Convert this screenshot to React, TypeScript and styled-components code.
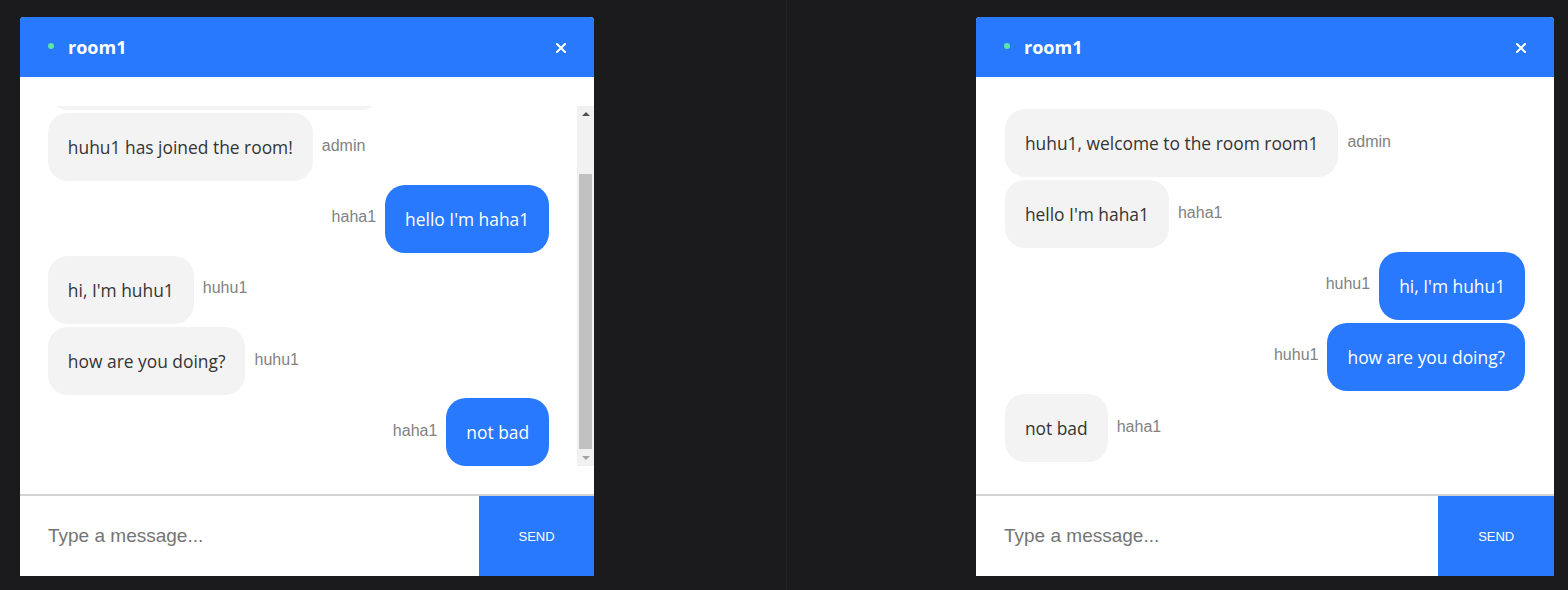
import React, { useLayoutEffect, useRef, useState } from "react";
import styled, { createGlobalStyle } from "styled-components";

const GlobalStyle = createGlobalStyle`
  html, body {
    margin: 0;
    padding: 0;
    background: #1b1b1d;
  }
  body {
    width: 1568px;
    height: 590px;
    overflow: hidden;
    font-family: "Open Sans", "Noto Sans", sans-serif;
  }
  * { box-sizing: border-box; }
`;

const Page = styled.div`
  display: flex;
  height: 590px;
`;

const Half = styled.div<{ $width: number; $padLeft: number }>`
  flex: none;
  width: ${(p) => p.$width}px;
  padding: 17px 0 14px ${(p) => p.$padLeft}px;
  display: flex;
`;

const Divider = styled.div`
  flex: none;
  width: 1px;
  background: #242426;
`;

const Panel = styled.div<{ $width: number }>`
  width: ${(p) => p.$width}px;
  height: 559px;
  background: #ffffff;
  border-radius: 4px 4px 0 0;
  overflow: hidden;
  display: flex;
  flex-direction: column;
`;

const Header = styled.div`
  flex: none;
  height: 60px;
  background: #2979ff;
  display: flex;
  align-items: center;
  padding: 0 28px;
`;

const OnlineDot = styled.span`
  width: 6px;
  height: 6px;
  border-radius: 50%;
  background: #5ce6a4;
  margin-right: 14px;
  margin-top: -2px;
`;

const Title = styled.h3`
  margin: 0;
  color: #ffffff;
  font-family: "Open Sans", sans-serif;
  font-weight: 700;
  font-size: 18px;
  line-height: 24px;
`;

const CloseButton = styled.button`
  margin-left: auto;
  width: 10px;
  height: 10px;
  padding: 0;
  border: none;
  background: transparent;
  display: flex;
  margin-top: 2px;
`;

const Body = styled.div`
  flex: none;
  height: 360px;
  box-sizing: content-box;
  padding: 29px 0 28px;
  border-bottom: 2px solid #d3d3d3;
`;

const ScrollFrame = styled.div`
  display: flex;
  height: 360px;
`;

const Viewport = styled.div`
  flex: 1;
  min-width: 0;
  height: 100%;
  overflow-y: auto;
  scrollbar-width: none;

  &::-webkit-scrollbar {
    display: none;
  }
`;

const ScrollBar = styled.div`
  flex: none;
  width: 17px;
  height: 100%;
  background: #f1f1f1;
  display: flex;
  flex-direction: column;
`;

const ArrowButton = styled.div<{ $dir: "up" | "down" }>`
  flex: none;
  height: 17px;
  display: flex;
  align-items: center;
  justify-content: center;

  &::before {
    content: "";
    width: 0;
    height: 0;
    border-left: 4px solid transparent;
    border-right: 4px solid transparent;
    ${(p) =>
      p.$dir === "up"
        ? "border-bottom: 4px solid #505050; margin-top: -1px;"
        : "border-top: 4px solid #a3a3a3; margin-top: 0px;"}
  }
`;

const Track = styled.div`
  flex: 1;
  padding: 0 2px;
  display: flex;
  flex-direction: column;
`;

const Thumb = styled.div`
  flex: none;
  background: #c1c1c1;
`;

const MessageList = styled.div`
  display: flex;
  flex-direction: column;
  gap: 3.25px;
  padding: 3px 5% 0;
`;

const Row = styled.div<{ $mine: boolean }>`
  display: flex;
  align-items: center;
  justify-content: ${(p) => (p.$mine ? "flex-end" : "flex-start")};
  gap: 9px;
`;

const Bubble = styled.div<{ $mine: boolean }>`
  border-radius: 20px;
  padding: 20px 20px;
  background: ${(p) => (p.$mine ? "#2979ff" : "#f3f3f3")};
  color: ${(p) => (p.$mine ? "#ffffff" : "#353535")};
  font-family: "Open Sans", sans-serif;
  font-size: 17.4px;
  line-height: 28px;
  white-space: nowrap;
`;

const Sender = styled.span`
  font-family: "Liberation Sans", Arial, sans-serif;
  font-size: 16px;
  color: #828282;
  margin-top: -3px;
`;

const Composer = styled.form`
  flex: none;
  height: 80px;
  display: flex;
  margin: 0;
`;

const Input = styled.input`
  flex: 1;
  min-width: 0;
  border: none;
  outline: none;
  padding: 0 0 0 28px;
  font-family: "Liberation Sans", Arial, sans-serif;
  font-size: 19px;
  color: #333;
  background: #fff;
  caret-color: #000;

  &::placeholder {
    color: #757575;
  }
`;

const SendButton = styled.button`
  flex: none;
  width: 20%;
  border: none;
  background: #2979ff;
  color: #ffffff;
  font-family: "Liberation Sans", Arial, sans-serif;
  font-size: 13px;
  text-transform: uppercase;
  padding: 0;
`;

type Msg = { user: string; text: string; mine: boolean };

const leftMessages: Msg[] = [
  { user: "admin", text: "huhu1, welcome to the room room1", mine: false },
  { user: "admin", text: "huhu1 has joined the room!", mine: false },
  { user: "haha1", text: "hello I'm haha1", mine: true },
  { user: "huhu1", text: "hi, I'm huhu1", mine: false },
  { user: "huhu1", text: "how are you doing?", mine: false },
  { user: "haha1", text: "not bad", mine: true },
];

const rightMessages: Msg[] = [
  { user: "admin", text: "huhu1, welcome to the room room1", mine: false },
  { user: "haha1", text: "hello I'm haha1", mine: false },
  { user: "huhu1", text: "hi, I'm huhu1", mine: true },
  { user: "huhu1", text: "how are you doing?", mine: true },
  { user: "haha1", text: "not bad", mine: false },
];

const CloseIcon = () => (
  <svg width="10" height="10" viewBox="0 0 10 10">
    <path d="M1 1 L9 9 M9 1 L1 9" stroke="#fff" strokeWidth="2" strokeLinecap="square" />
  </svg>
);

const TRACK_LEN = 360 - 34;

const ChatWindow = ({
  width,
  messages,
  focus,
}: {
  width: number;
  messages: Msg[];
  focus?: boolean;
}) => {
  const ref = useRef<HTMLDivElement>(null);
  const [ratio, setRatio] = useState(1);
  useLayoutEffect(() => {
    const el = ref.current;
    if (!el) return;
    el.scrollTop = el.scrollHeight;
    setRatio(el.clientHeight / el.scrollHeight);
  }, []);
  useLayoutEffect(() => {
    const el = ref.current;
    if (el) el.scrollTop = el.scrollHeight;
  }, [ratio]);
  const overflowing = ratio < 0.999;
  const thumb = Math.round(TRACK_LEN * ratio);
  return (
    <Panel $width={width}>
      <Header>
        <OnlineDot />
        <Title>room1</Title>
        <CloseButton type="button" aria-label="close">
          <CloseIcon />
        </CloseButton>
      </Header>
      <Body>
        <ScrollFrame>
          <Viewport ref={ref}>
            <MessageList>
              {messages.map((m, i) => (
                <Row key={i} $mine={m.mine}>
                  {m.mine ? (
                    <>
                      <Sender>{m.user}</Sender>
                      <Bubble $mine>{m.text}</Bubble>
                    </>
                  ) : (
                    <>
                      <Bubble $mine={false}>{m.text}</Bubble>
                      <Sender>{m.user}</Sender>
                    </>
                  )}
                </Row>
              ))}
            </MessageList>
          </Viewport>
          {overflowing && (
            <ScrollBar>
              <ArrowButton $dir="up" />
              <Track>
                <Thumb style={{ height: thumb, marginTop: TRACK_LEN - thumb }} />
              </Track>
              <ArrowButton $dir="down" />
            </ScrollBar>
          )}
        </ScrollFrame>
      </Body>
      <Composer onSubmit={(e) => e.preventDefault()}>
        <Input placeholder="Type a message..." autoFocus={focus} />
        <SendButton type="submit">Send</SendButton>
      </Composer>
    </Panel>
  );
};

export default function App() {
  return (
    <>
      <GlobalStyle />
      <Page>
        <Half $width={786} $padLeft={20}>
          <ChatWindow width={574} messages={leftMessages} focus />
        </Half>
        <Divider />
        <Half $width={781} $padLeft={189}>
          <ChatWindow width={578} messages={rightMessages} />
        </Half>
      </Page>
    </>
  );
}
